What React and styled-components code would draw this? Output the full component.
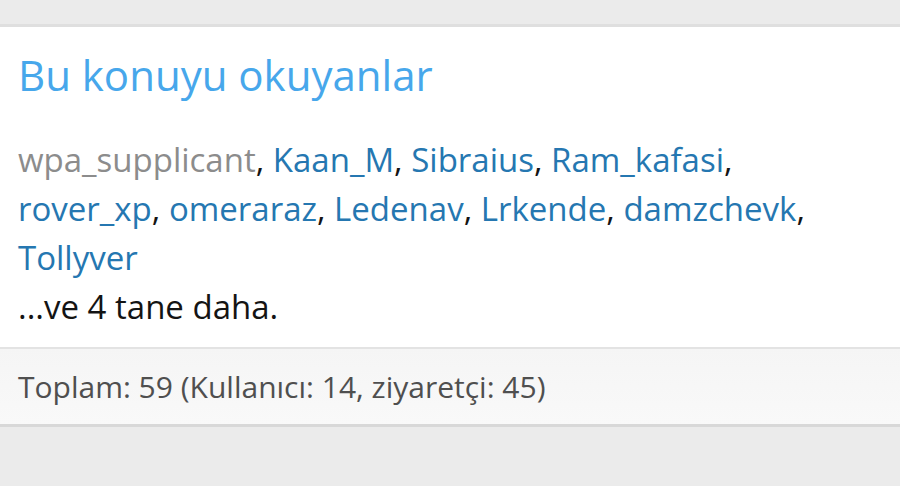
import React from 'react';
import styled, { createGlobalStyle } from 'styled-components';

const GlobalStyle = createGlobalStyle`
  html, body {
    margin: 0;
    padding: 0;
    background: #ebebeb;
    font-family: 'Open Sans', 'Noto Sans', sans-serif;
  }
`

const Page = styled.div`
  padding-top: 24px;
  padding-bottom: 60px;
`

const Block = styled.section`
  background: #fff;
  border-top: 3px solid #dfdfdf;
  border-bottom: 3px solid #d8d8d8;
`

const Body = styled.div`
  padding: 0 18px 16px;
`

const Title = styled.h3`
  margin: 0;
  padding: 22px 0 34px;
  font-size: 42px;
  font-weight: 400;
  line-height: 52px;
  color: #47a7eb;
`

const List = styled.div`
  font-size: 33px;
  line-height: 49px;
  color: #141414;
`

const User = styled.a`
  color: ${p => (p.$guest ? '#8c8c8c' : '#2577b1')};
  text-decoration: none;
`

const Footer = styled.div`
  border-top: 2px solid #e3e3e3;
  background: linear-gradient(to bottom, #f5f5f5, #f9f9f9);
  padding: 0 18px;
  height: 75px;
  display: flex;
  align-items: center;
  font-size: 30px;
  color: #4f4f4f;
`

const users = [
  { name: 'wpa_supplicant', guest: true },
  { name: 'Kaan_M' },
  { name: 'Sibraius' },
  { name: 'Ram_kafasi' },
  { name: 'rover_xp' },
  { name: 'omeraraz' },
  { name: 'Ledenav' },
  { name: 'Lrkende' },
  { name: 'damzchevk' },
  { name: 'Tollyver' },
]

const App = () => {
  return (
    <Page>
      <GlobalStyle />
      <Block>
        <Body>
          <Title>Bu konuyu okuyanlar</Title>
          <List>
            {users.map((u, i) => (
              <React.Fragment key={u.name}>
                <User href="#" $guest={u.guest}>{u.name}</User>
                {i < users.length - 1 ? ', ' : ''}
              </React.Fragment>
            ))}
            <div>...ve 4 tane daha.</div>
          </List>
        </Body>
        <Footer>Toplam: 59 (Kullanıcı: 14, ziyaretçi: 45)</Footer>
      </Block>
    </Page>
  )
}

export default App;
